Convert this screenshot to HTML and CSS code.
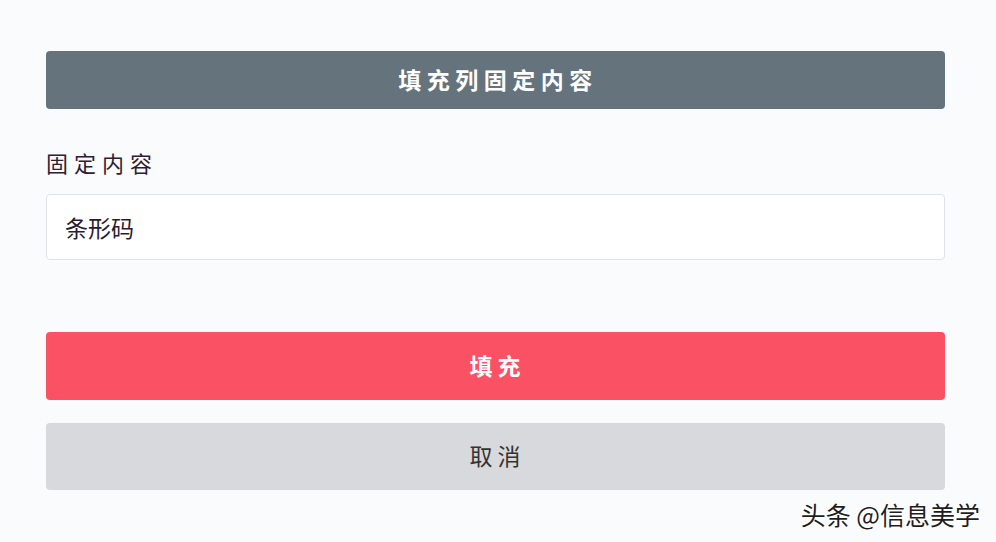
FILE: index.html
```html
<!DOCTYPE html>
<html lang="zh-CN">
<head>
<meta charset="utf-8">
<title>填充列固定内容</title>
<link rel="stylesheet" href="styles.css">
</head>
<body>
<div class="page">
  <div class="dialog">
    <div class="title-bar">填充列固定内容</div>
    <label class="field-label" for="fixed">固定内容</label>
    <div class="input-box" id="fixed">条形码</div>
    <div class="actions">
      <div class="btn btn-primary">填充</div>
      <div class="btn btn-cancel">取消</div>
    </div>
  </div>
  <div class="watermark">头条 @信息美学</div>
</div>
</body>
</html>
```

FILE: styles.css
```css
html, body {
  margin: 0;
  padding: 0;
  background: #fafbfd;
}
.page {
  position: relative;
  width: 996px;
  height: 542px;
  box-sizing: border-box;
  padding: 51px 51px 0 46px;
  font-family: "Noto Sans CJK SC", "Noto Sans", sans-serif;
  overflow: hidden;
}
.dialog {
  display: flex;
  flex-direction: column;
}
.title-bar {
  height: 58px;
  box-sizing: border-box;
  background: #65737c;
  border-radius: 4px;
  color: #ffffff;
  font-size: 23px;
  font-weight: 700;
  letter-spacing: 5.5px;
  display: flex;
  align-items: center;
  justify-content: center;
  padding-left: 5px;
  padding-bottom: 2px;
}
.field-label {
  margin-top: 40px;
  height: 45px;
  font-size: 22px;
  line-height: 26px;
  letter-spacing: 6px;
  color: #2e2033;
}
.input-box {
  height: 66px;
  box-sizing: border-box;
  background: #ffffff;
  border: 1px solid #dfe3e8;
  border-radius: 4px;
  padding-left: 18px;
  padding-bottom: 1px;
  display: flex;
  align-items: center;
  font-size: 23px;
  color: #2a1c2e;
}
.actions {
  margin-top: 72px;
  display: flex;
  flex-direction: column;
  gap: 23px;
}
.btn {
  height: 68px;
  box-sizing: border-box;
  border-radius: 4px;
  display: flex;
  align-items: center;
  justify-content: center;
  font-size: 23px;
  letter-spacing: 5px;
  padding-left: 4px;
  padding-bottom: 3px;
}
.btn-primary {
  background: #fa5165;
  color: #ffffff;
  font-weight: 700;
}
.btn-cancel {
  height: 67px;
  background: #d8d9dc;
  color: #333333;
}
.watermark {
  position: absolute;
  right: 16px;
  bottom: 13px;
  font-size: 25px;
  line-height: 30px;
  color: #1e1e1e;
  text-shadow: 1px 1px 0 #ffffff, -1px -1px 0 #ffffff, 1px -1px 0 #ffffff, -1px 1px 0 #ffffff;
}
```
